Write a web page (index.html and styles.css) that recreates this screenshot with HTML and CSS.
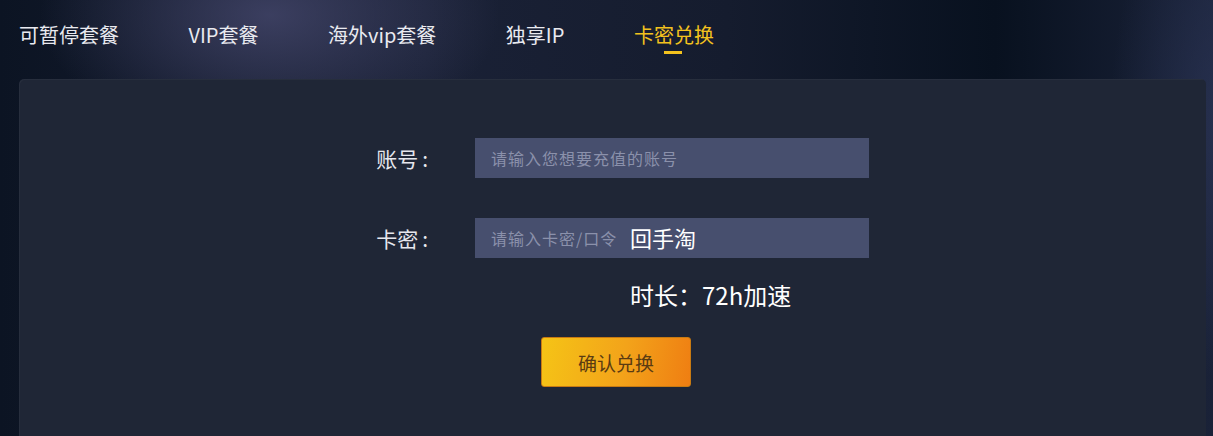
FILE: index.html
```html
<!DOCTYPE html>
<html>
    <head>
        <meta charset="utf-8">
        <title>卡密兑换</title>
        <link rel="stylesheet" href="styles.css">
    </head>
    <body>
    <ul class="tabs">
        <li class="tab">可暂停套餐</li>
        <li class="tab">VIP套餐</li>
        <li class="tab">海外vip套餐</li>
        <li class="tab">独享IP</li>
        <li class="tab tab-active">卡密兑换</li>
    </ul>

    <div class="card">
        <div class="form-row">
            <label class="form-label" for="account">账号<span class="colon">:</span></label>
            <input type="text" id="account" class="input-field" placeholder="请输入您想要充值的账号">
        </div>
        <div class="form-row">
            <label class="form-label" for="cardKey">卡密<span class="colon">:</span></label>
            <div class="input-wrap">
                <input type="text" id="cardKey" class="input-field" placeholder="请输入卡密/口令">
                <span class="input-note">回手淘</span>
            </div>
        </div>
        <p class="duration">时长：72h加速</p>
        <button class="button-primary">确认兑换</button>
    </div>
    </body>
</html>
```

FILE: styles.css
```css
body {
    margin: 0;
    height: 436px;
    overflow: hidden;
    font-family: "Noto Sans CJK SC", "Noto Sans", sans-serif;
    background:
        radial-gradient(ellipse 230px 130px at 270px 15px, rgba(72,74,112,0.75), rgba(72,74,112,0) 100%),
        radial-gradient(ellipse 120px 260px at 1230px 120px, rgba(45,55,90,0.7), rgba(45,55,90,0) 100%),
        linear-gradient(90deg, #0c1423 0%, #1a2136 35%, #151c2e 60%, #08111f 82%, #1a2238 100%);
    color: #fff;
}

.tabs {
    list-style: none;
    margin: 0;
    padding: 20px 0 0 19px;
    height: 59px;
    display: flex;
    gap: 69.5px;
}

.tab {
    position: relative;
    font-size: 20px;
    line-height: 30px;
    color: #e9eaf0;
}

.tab-active {
    color: #f3c21e;
}

.tab-active::after {
    content: "";
    position: absolute;
    left: 30px;
    top: 31px;
    width: 18px;
    height: 3px;
    background: #f3c21e;
}

.card {
    margin: 0 7px 0 19px;
    height: 357px;
    padding-top: 59px;
    box-sizing: border-box;
    background-color: #1f2636;
    border-radius: 5px 5px 0 0;
    box-shadow: inset 1px 1px 0 rgba(255,255,255,0.04);
}

.form-row {
    display: grid;
    grid-template-columns: 90px 394px;
    column-gap: 45px;
    align-items: center;
    margin-left: 321px;
    margin-bottom: 40px;
}

.form-row:last-of-type {
    margin-bottom: 0;
}

.form-label {
    text-align: right;
    font-size: 21px;
    color: #e6e7ee;
}

.colon {
    margin: 0 2px 0 4px;
}

.input-wrap {
    position: relative;
}

.input-field {
    display: block;
    width: 394px;
    height: 40px;
    box-sizing: border-box;
    padding: 0 16px;
    border: none;
    background-color: #474f6e;
    font-family: "Noto Sans CJK SC", sans-serif;
    font-size: 16px;
    letter-spacing: 1px;
    color: #fff;
}

.input-field::placeholder {
    color: #8b91ab;
}

.input-note {
    position: absolute;
    left: 155px;
    top: 4px;
    font-size: 22px;
    line-height: 30px;
    color: #fff;
}

.duration {
    margin: 22px 0 0 611px;
    font-size: 24px;
    line-height: 30px;
    color: #fff;
}

.button-primary {
    display: block;
    margin: 27px 0 0 522px;
    width: 150px;
    height: 50px;
    border: 1px solid #c87a12;
    border-radius: 3px;
    background: linear-gradient(100deg, #f5c416 0%, #f3a31a 55%, #ef7e12 100%);
    font-family: "Noto Sans CJK SC", sans-serif;
    font-size: 19px;
    color: #5a3b12;
}
```
